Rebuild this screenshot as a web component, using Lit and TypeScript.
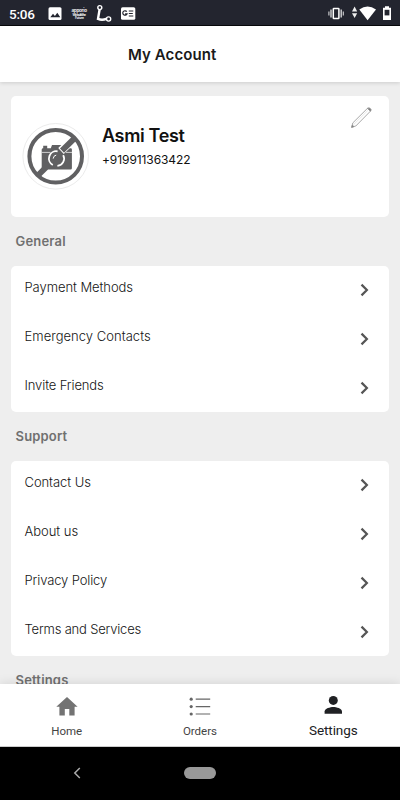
import { LitElement, html, css, svg } from "lit";
import { customElement, property } from "lit/decorators.js";
import { styleMap } from "lit/directives/style-map.js";

interface Row {
  label: string;
  tracking: number;
}

const general: Row[] = [
  { label: "Payment Methods", tracking: -0.06 },
  { label: "Emergency Contacts", tracking: 0.03 },
  { label: "Invite Friends", tracking: -0.12 },
];

const support: Row[] = [
  { label: "Contact Us", tracking: -0.07 },
  { label: "About us", tracking: -0.03 },
  { label: "Privacy Policy", tracking: -0.12 },
  { label: "Terms and Services", tracking: -0.19 },
];

@customElement("status-bar")
class StatusBar extends LitElement {
  static styles = css`
    :host {
      display: flex;
      box-sizing: border-box;
      height: 26px;
      background: #23252f;
      border-bottom: 1px solid #08090c;
    }
    svg {
      display: block;
    }
    .clock {
      font: 500 13.5px/28px Roboto, sans-serif;
      letter-spacing: -0.2px;
      color: #fff;
      width: 38px;
      padding-left: 9px;
    }
    .fill {
      flex: 1;
    }
    .tiny {
      font-family: Inter, sans-serif;
      font-weight: 700;
    }
  `;
  render() {
    return html`
      <span class="clock">5:06</span>
      <svg width="93" height="26" viewBox="47 0 93 26">
        <rect x="48.5" y="7.3" width="13" height="12.8" rx="1.5" fill="#fff" />
        <path d="M50.3 17.2l2.7-3.4 1.9 2.1 2.4-3.2 3 4.5z" fill="#23252f" />
        <g fill="#f2f2f2" class="tiny">
          <text x="71.5" y="11.8" font-size="4.6" textLength="15.5">apporio</text>
          <text x="72.5" y="15.8" font-size="3.2" textLength="13.5">We build the</text>
          <text x="75" y="18.8" font-size="3.2" textLength="9">Future</text>
        </g>
        <g fill="none" stroke="#fff">
          <path d="M99.6 9.5L98 18.9Q102 20.6 106.3 18.9" stroke-width="2.4" stroke-linecap="round" />
          <circle cx="99.8" cy="7.6" r="2" stroke-width="1.4" fill="#23252f" />
          <circle cx="108.6" cy="19" r="2.1" stroke-width="1.4" fill="#23252f" />
        </g>
        <rect x="121" y="7.2" width="14.3" height="12.6" rx="1.6" fill="#fff" />
        <g fill="none" stroke="#23252f" stroke-width="1.2">
          <path d="M126.8 11.7a2.2 2.2 0 1 0 .2 2.2h-1.9" />
          <path d="M128.8 11h4.5M128.8 13.5h4M128.8 16h4.5" />
        </g>
      </svg>
      <span class="fill"></span>
      <svg width="75" height="26" viewBox="325 0 75 26">
        <g fill="none" stroke="#fff">
          <rect x="333.3" y="8.5" width="5.6" height="10" rx=".6" stroke-width="1.5" />
          <path d="M331 9.5v8M341.2 9.5v8" stroke-width="1.4" opacity=".8" />
          <path d="M328.9 11.5v4M343.3 11.5v4" stroke-width="1.2" opacity=".75" />
        </g>
        <path d="M354.6 6.4l2.6 5h-5.2zM354.6 18l-2.6-4.8h5.2z" fill="#eee" />
        <path d="M367.6 20.2L359.3 9.6Q367.6 3.2 376 9.6z" fill="#fff" />
        <path d="M383 7.8h2V6.2h4v1.6h2V20h-8z" fill="#fff" />
        <path d="M384.6 9.8h4.8v5.6h-4.8z" fill="#23252f" />
      </svg>
    `;
  }
}

@customElement("profile-card")
class ProfileCard extends LitElement {
  static styles = css`
    :host {
      display: flex;
      box-sizing: border-box;
      height: 121px;
      padding: 0 17px 0 11px;
      border-radius: 5px;
      background: #fff;
    }
    .avatar {
      width: 68px;
      height: 68px;
      margin-top: 26px;
    }
    .who {
      flex: 1;
      margin: 28px 0 0 12px;
      color: #111;
      font-family: Inter, "Open Sans", sans-serif;
    }
    .name {
      font-size: 18px;
      line-height: 24px;
      font-weight: 600;
      letter-spacing: -0.35px;
    }
    .phone {
      font-size: 12px;
      line-height: 16px;
      margin-top: 4px;
      letter-spacing: -0.08px;
    }
    .edit {
      width: 22px;
      height: 24px;
      margin-top: 10px;
    }
  `;
  render() {
    return html`
      <svg class="avatar" viewBox="22 122 68 68">
        <circle cx="55.7" cy="156.3" r="32.8" fill="#fff" stroke="#ebebeb" />
        <path d="M43.2 148.3v-2.6h4v2.6h3.6l1.2-3.2h9.6l1.2 3.2h7.8q1.3 0 1.3 1.3v18.6q0 1.2-1.3 1.2H43q-1.3 0-1.3-1.3V149.6q0-1.3 1.5-1.3z" fill="#606062" />
        <path d="M41.7 152.4H50.5M66 152.4h6" stroke="#fff" stroke-width=".7" />
        <path d="M61 151L75.2 137.4" stroke="#fff" stroke-width="8" />
        <path d="M37.3 176L46 167.4M62 150.6L75.2 137.6" stroke="#606062" stroke-width="5.8" />
        <path d="M52.8 165A7.3 7.3 0 0 1 57.6 151.4M63.2 155.2A7.3 7.3 0 0 1 57.4 165.9" fill="none" stroke="#fff" stroke-width="1.8" />
        <path d="M53.2 158.6a3.8 3.8 0 0 1 3-3.5" fill="none" stroke="#fff" stroke-width="1" />
        <circle cx="55.7" cy="156.3" r="26.3" fill="none" stroke="#606062" stroke-width="4" />
      </svg>
      <div class="who">
        <div class="name">Asmi Test</div>
        <div class="phone">+919911363422</div>
      </div>
      <svg class="edit" viewBox="350 106 22 24" fill="none" stroke="#929292" stroke-width=".8">
        <path d="M351.7 127.3l1.1-4.4L367.5 108.3q1.2-1 2.6.2t.3 2.7L355.8 126z" />
        <path d="M353.4 124.8L367.8 110.5" stroke="#d8d8d8" stroke-width=".6" />
        <path d="M367.4 108.4l3 2.8 .7-1.3-1.2-1.7z" fill="#777" />
        <path d="M351.6 127.4l.7-2.3 1.6 1.5z" fill="#777" />
      </svg>
    `;
  }
}

@customElement("menu-section")
class MenuSection extends LitElement {
  @property() heading = "";
  @property({ attribute: false }) rows: Row[] = [];
  static styles = css`
    :host {
      display: block;
      font-family: Inter, "Open Sans", sans-serif;
    }
    .heading {
      height: 49px;
      line-height: 49px;
      padding-left: 4.5px;
      font-size: 13px;
      font-weight: 600;
      letter-spacing: 0.18px;
      color: #707070;
    }
    .card {
      background: #fff;
      border-radius: 5px;
    }
    .row {
      display: flex;
      justify-content: space-between;
      height: 48.75px;
      padding: 0 17px 0 13.5px;
      font-size: 13px;
      font-weight: 300;
      line-height: 43px;
      color: #151515;
    }
    svg {
      width: 14px;
      height: 14px;
      margin-top: 17px;
    }
  `;
  render() {
    return html`
      <div class="heading">${this.heading}</div>
      ${this.rows.length
        ? html`<div class="card">
            ${this.rows.map(
              (r) => html`<div class="row">
                <span style=${styleMap({ letterSpacing: `${r.tracking}px` })}>${r.label}</span>
                <svg viewBox="0 0 14 14">
                  <path d="M3.5 1.6L8.9 7 3.5 12.4" fill="none" stroke="#555" stroke-width="2.2" />
                </svg>
              </div>`
            )}
          </div>`
        : ""}
    `;
  }
}

const homeIcon = svg`<path d="M11 1L21.6 10.8H18.6V19.6H13.3V13H8.8V19.6H3.4V10.8H.3z" fill="#737373"/>`;
const listIcon = svg`<g fill="#666"><circle cx="2.2" cy="3.2" r="1.6"/><circle cx="2.2" cy="10.6" r="1.6"/><circle cx="2.2" cy="18" r="1.6"/></g>
  <path d="M6.7 3.2H21.2M6.7 10.6H21.2M6.7 18H21.2" stroke="#666" stroke-width="1.2"/>`;
const personIcon = svg`<circle cx="11.3" cy="4.4" r="4.5" fill="#202124"/><path d="M2.6 17.8V15.4C2.6 12.5 8.3 11 11.3 11S20 12.5 20 15.4V17.8z" fill="#202124"/>`;

@customElement("bottom-nav")
class BottomNav extends LitElement {
  static styles = css`
    :host {
      display: grid;
      grid-template-columns: repeat(3, 1fr);
      box-sizing: border-box;
      height: 63px;
      background: #fff;
      border-bottom: 1px solid #ccc;
      box-shadow: 0 -1px 10px rgba(0, 0, 0, 0.1);
      font-family: Roboto, sans-serif;
      color: #444;
    }
    .tab {
      display: flex;
      flex-direction: column;
      align-items: center;
      padding-top: 12px;
    }
    svg {
      width: 22px;
      height: 22px;
      overflow: visible;
    }
    .text {
      height: 16px;
      margin-top: 5px;
      font-size: 11.5px;
      line-height: 17px;
    }
    .active .text {
      font-size: 13.5px;
      letter-spacing: -0.1px;
      margin-top: 4px;
      color: #202124;
    }
  `;
  render() {
    return html`
      <div class="tab"><svg viewBox="0 0 22 22">${homeIcon}</svg><span class="text">Home</span></div>
      <div class="tab"><svg viewBox="0 0 22 22">${listIcon}</svg><span class="text">Orders</span></div>
      <div class="tab active"><svg viewBox="0 0 22 22">${personIcon}</svg><span class="text">Settings</span></div>
    `;
  }
}

@customElement("app-root")
class AppRoot extends LitElement {
  static styles = css`
    :host {
      display: flex;
      flex-direction: column;
      height: 800px;
      width: 400px;
      overflow: hidden;
      background: #eee;
    }
    .title {
      height: 56px;
      flex: none;
      background: #fff;
      box-shadow: 0 1px 4px rgba(0, 0, 0, 0.14);
      padding-left: 128px;
      font: 600 15px/57px Inter, "Open Sans", sans-serif;
      letter-spacing: 0.08px;
      color: #1a1a1a;
    }
    .content {
      flex: 1;
      min-height: 0;
      overflow: hidden;
      margin-top: 6px;
      padding: 8px 11px 0;
    }
    .system {
      flex: none;
      display: grid;
      grid-template-columns: repeat(3, 1fr);
      box-sizing: border-box;
      height: 53px;
      padding-bottom: 1px;
      align-items: center;
      justify-items: center;
      background: #000;
    }
    .back {
      width: 10px;
      height: 12px;
      margin-left: 20px;
    }
    .pill {
      width: 32px;
      height: 12px;
      border-radius: 6px;
      background: #999;
    }
  `;
  render() {
    return html`
      <status-bar></status-bar>
      <div class="title">My Account</div>
      <main class="content">
        <profile-card></profile-card>
        <menu-section heading="General" .rows=${general}></menu-section>
        <menu-section heading="Support" .rows=${support}></menu-section>
        <menu-section heading="Settings"></menu-section>
      </main>
      <bottom-nav></bottom-nav>
      <div class="system">
        <svg class="back" viewBox="0 0 10 12"><path d="M7.8 1L2.8 6l5 5" fill="none" stroke="#aaa" stroke-width="1.5" /></svg>
        <span class="pill"></span>
      </div>
    `;
  }
}
